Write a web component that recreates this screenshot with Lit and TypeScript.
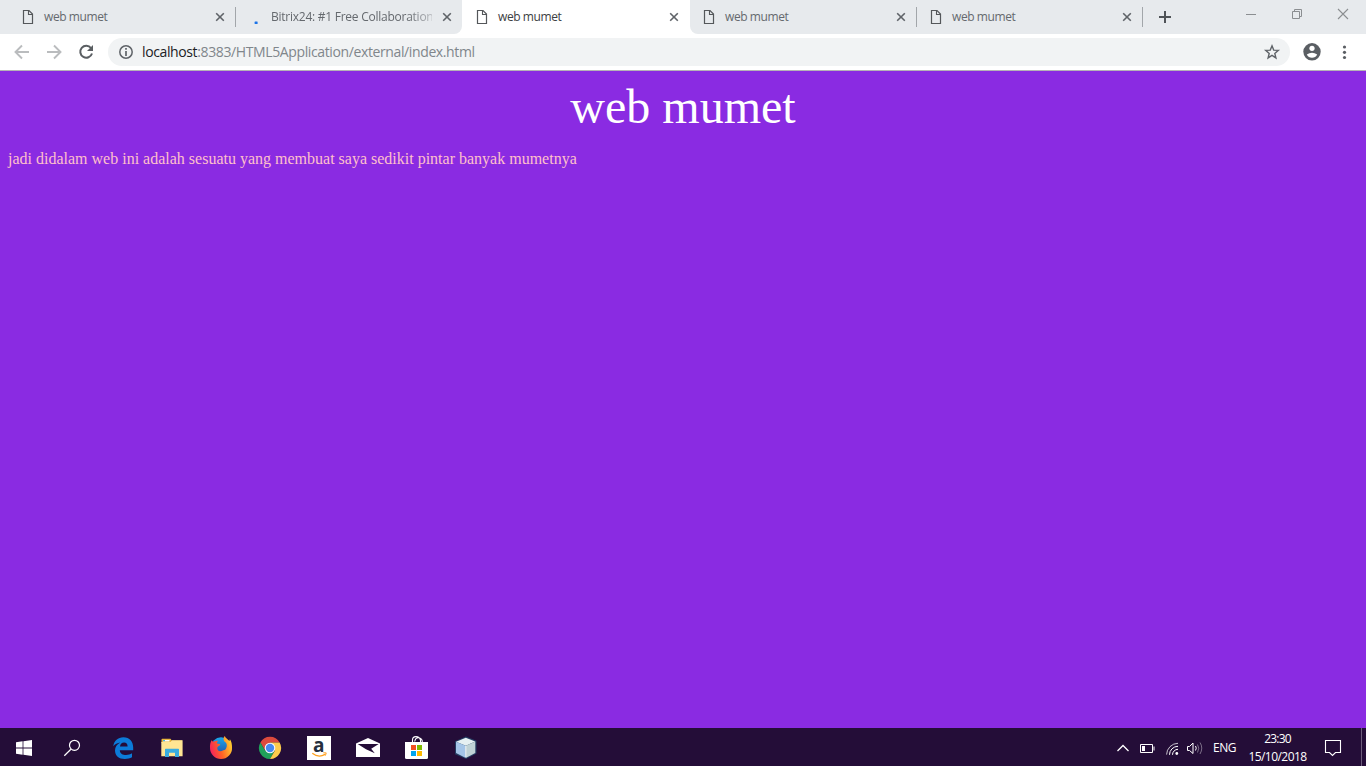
import { LitElement, html, css, svg } from "lit";
import { customElement, property } from "lit/decorators.js";

const pageIcon = html`<svg class="page" width="12" height="16" viewBox="0 0 12 16">
  <path d="M1.5 1.5H7L10.5 5V14.5H1.5Z" fill="none" stroke="#54575a" stroke-width="1.2"/>
  <path d="M6.5 1.5V5.5H10.5" fill="none" stroke="#54575a" stroke-width="1.1"/>
</svg>`;

const spinner = html`<svg class="page" width="12" height="16" viewBox="0 0 12 16">
  <rect x="5.6" y="12.6" width="3" height="2.4" rx=".5" fill="#1a73e8"/>
</svg>`;

@customElement("browser-tab")
class BrowserTab extends LitElement {
  @property() label = "";
  @property({ type: Boolean, reflect: true }) loading = false;
  @property({ type: Boolean, reflect: true }) active = false;
  @property({ type: Boolean, reflect: true }) divided = false;
  @property({ type: Boolean, reflect: true }) first = false;
  @property({ type: Boolean, reflect: true }) last = false;

  static styles = css`
    :host { display: flex; box-sizing: border-box; width: 227px; height: 34px; padding-left: 13px; align-items: center; color: #65696e; flex: none; }
    :host([active]) { background: #fff; border-radius: 8px 8px 0 0; color: #3c4043; }
    :host([active]), :host([first]) { width: 228px; padding-left: 14px; }
    :host([loading]), :host([last]) { width: 226px; }
    .page { display: block; flex: none; }
    .label { flex: 1; min-width: 0; margin: 0 10px; white-space: nowrap; font: 12px/16px "Open Sans", "Noto Sans", sans-serif; letter-spacing: -.42px; }
    .fade { mask-image: linear-gradient(90deg, #000 136px, rgba(0, 0, 0, .35) 160px); letter-spacing: -.25px; }
    .close { flex: none; }
    .rule { width: 1px; height: 20px; background: #a2a6aa; margin-left: 10px; flex: none; }
    :host(:not([divided])) .rule { background: none; }
    :host([loading]) .rule { margin-left: 9px; }
  `;

  render() {
    return html`${this.loading ? spinner : pageIcon}
      <span class="label ${this.loading ? "fade" : ""}">${this.label}</span>
      <svg class="close" width="10" height="10" viewBox="0 0 10 10"><path d="M1.2 1.2 8.8 8.8M8.8 1.2 1.2 8.8" stroke="#5f6368" stroke-width="1.6"/></svg>
      <span class="rule"></span>`;
  }
}

const startIcon = svg`<path fill="#fff" d="M16 742.3 22.6 741.3V747.5H16ZM23.4 741.2 32 740V747.5H23.4ZM16 748.4H22.6V754.7L16 753.8ZM23.4 748.4H32V756L23.4 754.8Z"/>`;
const searchIcon = svg`<g fill="none" stroke="#fff" stroke-width="1.2"><circle cx="74.5" cy="745.3" r="5"/><path d="M70.9 749.2 64.3 755.7"/></g>`;
const edgeIcon = svg`<path fill="#0c7bd9" d="M113.3 746.2C114 741 118 737.3 123.4 737.3C129.700 737.300 133.200 742 133.200 747.500V750.200H119.800C120 753.500 122.800 755 126 755C128.400 755 130.400 754.300 132 753.300V757.200C130 758.300 127.600 758.900 124.800 758.900C118.800 758.900 115 755.600 115 750.400C115 746.800 117 744 120.300 742.400C117.500 742.700 115 743.900 113.300 746.200ZM120 746.500H127.600C127.600 744 126.300 742.500 124.100 742.500C121.800 742.500 120.300 744 120 746.500Z"/>`;
const folderIcon = svg`<path fill="#e9b63c" d="M161.500 739.500Q161.500 738.800 162.200 738.800H170.500L171.800 740.500H182V743H161.500Z"/>
  <path fill="#fff" d="M163 740H169.500V741.500H163Z"/><path fill="#48b5e5" d="M163 740H165V741.200H163Z"/>
  <path fill="#ffe593" d="M161.300 742H170.500L172 740.300H182.600V756.200H161.300Z"/>
  <path fill="#3aace0" d="M165 749.500Q165 748.800 165.700 748.800H178.300Q179 748.800 179 749.500V757H175V752.700H169V757H165Z"/>`;
const firefoxIcon = svg`<defs>
    <linearGradient id="fx" x1="0" y1=".6" x2="1" y2=".3"><stop offset="0" stop-color="#f5215d"/><stop offset=".45" stop-color="#ff6325"/><stop offset="1" stop-color="#ffd531"/></linearGradient>
    <linearGradient id="fb" x1="0" y1="0" x2="0" y2="1"><stop offset="0" stop-color="#19a8ed"/><stop offset="1" stop-color="#2544a0"/></linearGradient></defs>
  <circle cx="221" cy="747.300" r="10" fill="url(#fb)"/>
  <path fill="url(#fx)" d="M211.500 740.200C212 741.200 213 741.800 214.200 741.600C215.500 740.600 217 740.500 218 740.900C217.200 741.700 216.800 742.800 217 743.600L220.300 744.200C220 745.700 218 746 217.300 747.500C216.800 751.200 220.300 752.100 223.300 750.300C225.300 750.400 226.200 748.600 226.700 746.500C227.200 743.900 226 742.300 224.200 741.200C223 739.300 223.600 737.200 224.800 736C225.500 738.200 227.600 739.100 229.300 741C229.800 740.400 229.900 739.800 229.800 739C231.600 741.600 232 744.600 232 747.200A11 11 0 0 1 221 759A11 11 0 0 1 210 748C209.800 745 210.400 742.400 211.500 740.200Z"/>`;
const chromeIcon = svg`<path fill="#dc4a3d" d="M260.400 742.500A11 11 0 0 1 279.600 742.500L270 742.500L265.200 750.800Z"/>
  <path fill="#20a05a" d="M260.400 742.500L265.200 750.800H274.700L270 759A11 11 0 0 1 260.400 742.500Z"/>
  <path fill="#fccb4c" d="M279.600 742.500A11 11 0 0 1 270 759L274.800 750.800L270 742.500Z"/>
  <circle cx="270" cy="748" r="5.300" fill="#f5f7fb"/><circle cx="270" cy="748" r="4.200" fill="#4688f1"/>`;
const amazonIcon = svg`<rect x="307" y="736" width="24" height="24" fill="#fff"/>
  <text x="318.800" y="751.500" text-anchor="middle" font-family="Open Sans, sans-serif" font-weight="700" font-size="19" fill="#252f3e">a</text>
  <path d="M312.300 753.300Q318.500 758.200 325 754.400" fill="none" stroke="#ff9f1a" stroke-width="1.300"/><path d="M323.300 752.800 326.200 752.900 325.400 755.600" fill="none" stroke="#ff9f1a" stroke-width="1"/>`;
const mailIcon = svg`<path fill="#fff" d="M356 743.500 368 738 380 743.500V757H356Z"/><path fill="#240d38" d="M357.700 743.900H378.700L371.200 748.700L374.800 753.200L366 749.300Z"/>`;
const storeIcon = svg`<path fill="#fff" d="M405 742H428V757.500Q428 759 426.500 759H406.500Q405 759 405 757.500Z"/>
  <path d="M412.500 742.500V740Q412.500 736.600 416 736.600T420.500 740V742.500M414.700 741.500Q415.300 737.600 418.500 737.700Q422.300 738 422.300 742" stroke="#fff" fill="none" stroke-width="1.100"/>
  <path fill="#f25022" d="M411 745H416V750H411Z"/><path fill="#7fba00" d="M417 745H422V750H417Z"/><path fill="#00a4ef" d="M411 751H416V756H411Z"/><path fill="#ffb900" d="M417 751H422V756H417Z"/>`;
const cubeIcon = svg`<path d="M456 742 466 737.500 475.500 741.500V753L466 758L456 753.500Z" fill="#285870" stroke="#245073" stroke-width="2" opacity=".7"/>
  <path fill="#e5f0f2" d="M456 741.800 465.800 737.700 475.300 741.500 465.800 745.800Z"/><path fill="#a4c5e8" d="M456 741.800 465.800 745.800V758L456 753Z"/><path fill="#bfd2d5" d="M465.800 745.800 475.300 741.500V753L465.800 758Z"/><path d="M465.800 745.800V757" stroke="#f8fbfc"/>`;

const apps: [number, number, unknown][] = [
  [0, 48, startIcon], [48, 50, searchIcon], [98, 49, edgeIcon], [147, 49, folderIcon], [196, 49, firefoxIcon],
  [245, 49, chromeIcon], [294, 49, amazonIcon], [343, 49, mailIcon], [392, 49, storeIcon], [441, 49, cubeIcon],
];

@customElement("task-bar")
class TaskBar extends LitElement {
  static styles = css`
    :host { display: flex; height: 38px; background: #240d38; color: #fff; font: 12px/18px "Open Sans", "Noto Sans", sans-serif; }
    svg { display: block; flex: none; }
    .tray { display: flex; margin-left: auto; align-items: center; }
    .lang { width: 31px; padding: 2px 0 0 3px; letter-spacing: -.5px; white-space: nowrap; }
    .clock { width: 67px; margin-right: 2px; text-align: center; margin-top: 1px; white-space: nowrap; }
    .time { letter-spacing: -.8px; }
    .date { letter-spacing: -.55px; }
  `;
  render() {
    return html`${apps.map(([x, w, icon]) => html`<svg width=${w} height="38" viewBox="${x} 728 ${w} 38">${icon}</svg>`)}
      <div class="tray">
        <svg width="100" height="38" viewBox="1110 728 100 38">
          <g fill="none" stroke="#fff">
            <path d="M1117.500 751 1123 745.500 1128.500 751" stroke-width="1.300"/>
            <path d="M1140.500 744.500H1152.500V752.500H1140.500ZM1154 746.500V750.500"/>
            <path d="M1166.600 754.600A11.500 11.500 0 0 1 1178 743.300" opacity=".75"/>
            <path d="M1169.500 754.800A8.500 8.500 0 0 1 1178 746.300M1172.500 754.800A5.500 5.500 0 0 1 1178 749.300"/>
            <path d="M1187.500 746.500H1189.500L1193 743V753.500L1189.500 750.500H1187.500Z"/>
            <path d="M1195.500 746Q1197 748 1195.500 750.500"/>
            <path d="M1197.500 744.500Q1200 748 1197.500 752.500M1200 742.500Q1203.500 748 1200 754" opacity=".4"/>
          </g>
          <path d="M1142 746H1145V751H1142Z" fill="#fff"/><circle cx="1176.800" cy="753.500" r="1.400" fill="#fff"/>
        </svg>
        <span class="lang">ENG</span>
        <div class="clock"><div class="time">23:30</div><div class="date">15/10/2018</div></div>
        <svg width="53" height="38" viewBox="1313 728 53 38">
          <path d="M1325.500 740.500H1340.500V752.500H1335.500L1332.500 755.500L1329.500 752.500H1325.500Z" fill="none" stroke="#fff" stroke-width="1.100"/>
          <path d="M1361.500 728V766" stroke="#6d5d7b"/>
        </svg>
      </div>`;
  }
}

@customElement("app-root")
class AppRoot extends LitElement {
  static styles = css`
    :host { display: flex; flex-direction: column; width: 1366px; height: 766px; overflow: hidden; background: #8a2be2; }
    svg { display: block; flex: none; }
    .strip { display: flex; height: 34px; padding-left: 8px; background: #e7eaed; }
    .left, .right { display: flex; background: #e7eaed; }
    .join { background: #fff; display: flex; flex: 1; }
    .left { border-radius: 0 0 8px 0; }
    .right { border-radius: 0 0 0 8px; flex: 1; }
    .bar { display: flex; height: 36px; background: #fff; border-bottom: 1px solid #b6b4b6; align-items: center; }
    .omni { display: flex; align-items: center; width: 1182px; height: 28px; border-radius: 14px; background: #f1f3f4; font: 14px/20px "Open Sans", "Noto Sans", sans-serif; color: #80868b; }
    .url { flex: 1; white-space: nowrap; letter-spacing: -.38px; }
    .host { color: #202124; }
    .content { flex: 1; padding: 8px; font-family: "Liberation Serif", serif; }
    h1 { margin: 0; font-size: 48px; line-height: 55px; font-weight: 400; text-align: center; color: #fff; }
    p { margin: 16px 0; font-size: 16px; line-height: 18px; color: #ffc0cb; }
  `;
  render() {
    return html`
      <div class="strip">
        <div class="join">
          <div class="left">
            <browser-tab label="web mumet" divided first></browser-tab>
            <browser-tab label="Bitrix24: #1 Free Collaboration" loading></browser-tab>
          </div>
          <browser-tab label="web mumet" active></browser-tab>
          <div class="right">
            <browser-tab label="web mumet" divided></browser-tab>
            <browser-tab label="web mumet" divided last></browser-tab>
            <svg width="223" height="34" viewBox="1143 0 223 34" fill="none" stroke="#8b8e91">
              <path d="M1165 11V23M1159 17H1171" stroke="#4f5357" stroke-width="2"/>
              <path d="M1246 14.500H1256"/>
              <path d="M1292.500 11.500H1299.500V18.500H1292.500ZM1294.500 11.500V9.500H1301.500V16.500H1299.500"/>
              <path d="M1338 9 1348 19M1348 9 1338 19" stroke-width="1.100"/>
            </svg>
          </div>
        </div>
      </div>
      <div class="bar">
        <svg width="108" height="36" viewBox="0 34 108 36" fill="none" stroke="#babcbe" stroke-width="1.900">
          <path d="M29 52H16M22 45.500 15.500 52 22 58.500"/><path d="M47 52H60M54 45.500 60.500 52 54 58.500"/>
          <path d="M91 48A6 6 0 1 0 92 53.500" stroke="#5a5e62" stroke-width="2"/><path d="M93 45V51H87Z" fill="#5a5e62" stroke="none"/>
        </svg>
        <div class="omni">
          <svg width="34" height="28" viewBox="108 38 34 28"><circle cx="126" cy="52" r="6.200" fill="none" stroke="#5f6368" stroke-width="1.500"/><path d="M126 51V56M126 48V49.800" stroke="#5f6368" stroke-width="1.700"/></svg>
          <span class="url"><span class="host">localhost</span>:8383/HTML5Application/external/index.html</span>
          <svg width="36" height="28" viewBox="1254 38 36 28"><path d="M1272 45.800 1273.700 50.100 1278.300 50.400 1274.800 53.400 1275.900 57.900 1272 55.400 1268.100 57.900 1269.200 53.400 1265.700 50.400 1270.300 50.100Z" fill="none" stroke="#5f6368" stroke-width="1.400"/></svg>
        </div>
        <svg width="76" height="36" viewBox="1290 34 76 36" fill="#5a5e63">
          <circle cx="1312" cy="51.800" r="8.700"/><circle cx="1312" cy="48.300" r="2.600" fill="#fff"/><path d="M1306.800 54.500Q1312 51 1317.200 54.500Q1315.500 57.800 1312 57.800T1306.800 54.500Z" fill="#fff"/>
          <circle cx="1344.500" cy="47" r="1.600"/><circle cx="1344.500" cy="52.300" r="1.600"/><circle cx="1344.500" cy="57.500" r="1.600"/>
        </svg>
      </div>
      <main class="content"><h1>web mumet</h1><p>jadi didalam web ini adalah sesuatu yang membuat saya sedikit pintar banyak mumetnya</p></main>
      <task-bar></task-bar>`;
  }
}
